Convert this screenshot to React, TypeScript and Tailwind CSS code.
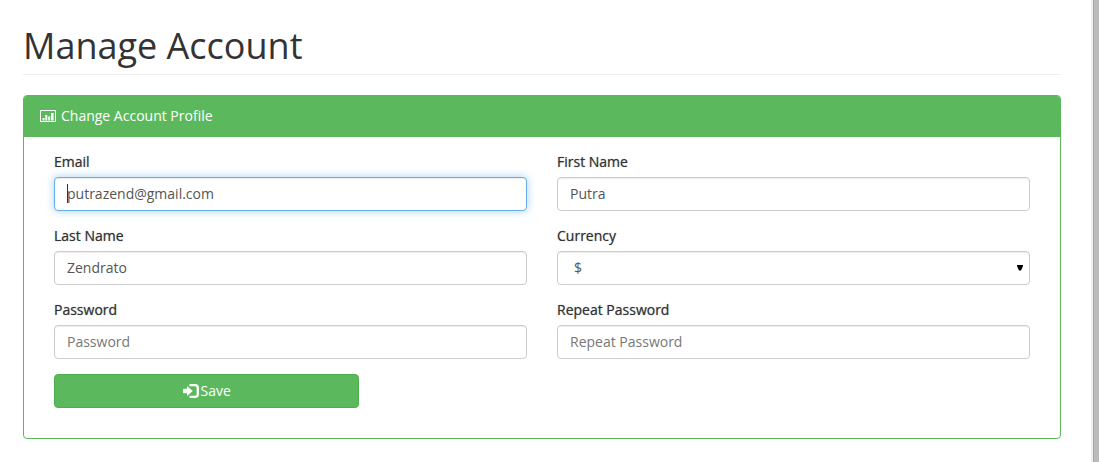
import React from "react";

const labelClass = "mb-[5px] block font-medium text-[#333333] [text-shadow:0_0_1px_#33333399]";
const controlClass =
  "block h-[34px] w-full rounded border border-[#cccccc] bg-white px-3 pb-[2px] text-sm text-[#555555] shadow-[inset_0_1px_1px_rgba(0,0,0,0.075)] outline-none placeholder:text-[#777777] focus:border-[#66afe9] focus:shadow-[inset_0_1px_1px_rgba(0,0,0,0.075),0_0_8px_rgba(102,175,233,0.6)]";

function StatsIcon() {
  return (
    <svg className="h-4 w-4 shrink-0" viewBox="0 0 16 16" fill="currentColor" aria-hidden="true">
      <path fillRule="evenodd" d="M1 2h14a1 1 0 0 1 1 1v10a1 1 0 0 1-1 1H1a1 1 0 0 1-1-1V3a1 1 0 0 1 1-1Zm0 1v10h14V3Z" />
      <path d="M2.5 10h2v2.5h-2zM5.3 7h2v5.5h-2zM8.2 8.5h2v4h-2zM11 5h2.6v7.5H11z" />
    </svg>
  );
}

function LogInIcon() {
  return (
    <svg className="h-4 w-4 shrink-0" viewBox="0 0 16 16" fill="currentColor" aria-hidden="true">
      <path d="M0.6 5.8H4V2.9L9.8 8 4 13.1v-2.9H0.6a0.6 0.6 0 0 1-0.6-0.6V6.4a0.6 0.6 0 0 1 0.6-0.6Z" />
      <path d="M6.5 1H12a4 4 0 0 1 4 4v6a4 4 0 0 1-4 4H6.5v-2.2H12a1.6 1.6 0 0 0 1.6-1.6V4.8A1.6 1.6 0 0 0 12 3.2H6.5Z" />
    </svg>
  );
}

type FieldProps = {
  id: string;
  label: string;
  type?: string;
  value?: string;
  placeholder?: string;
};

function Field({ id, label, type = "text", value, placeholder }: FieldProps) {
  return (
    <div>
      <label htmlFor={id} className={labelClass}>{label}</label>
      <input id={id} name={id} type={type} defaultValue={value} placeholder={placeholder} className={controlClass} />
    </div>
  );
}

export default function App() {
  return (
    <div className="flex min-h-screen bg-white font-['Open_Sans',sans-serif] text-sm leading-5 text-[#333333]">
      <main className="min-w-0 flex-1 pt-[26px] pr-[30px] pb-6 pl-[23px]">
        <h1 className="mb-5 border-b border-[#eeeeee] pb-2 text-4xl leading-10 font-normal">Manage Account</h1>
        <section className="overflow-hidden rounded border border-[#5cb85c]">
          <h2 className="flex items-center gap-[5px] border-b border-[#5cb85c] bg-[#5cb85c] px-4 py-[10px] text-white">
            <StatsIcon />
            Change Account Profile
          </h2>
          <form className="px-[30px] pt-[15px] pb-[30px]" onSubmit={(e) => e.preventDefault()}>
            <div className="grid grid-cols-2 gap-x-[30px] gap-y-[15px]">
              <div>
                <label htmlFor="email" className={labelClass}>Email</label>
                <div className="relative">
                  <input
                    id="email"
                    name="email"
                    type="email"
                    autoFocus
                    defaultValue="putrazend@gmail.com"
                    className={`${controlClass} caret-transparent`}
                  />
                  <span className="pointer-events-none absolute top-[7px] left-[13px] h-[19px] w-px bg-[#333333]" />
                </div>
              </div>
              <Field id="first-name" label="First Name" value="Putra" />
              <Field id="last-name" label="Last Name" value="Zendrato" />
              <div>
                <label htmlFor="currency" className={labelClass}>Currency</label>
                <div className="relative">
                  <select id="currency" name="currency" defaultValue="$" className={`${controlClass} appearance-none pt-px pb-0 pl-4`}>
                    <option>$</option>
                  </select>
                  <svg
                    className="pointer-events-none absolute top-[14px] right-[7px] h-[6px] w-[6px]"
                    viewBox="0 0 6 6"
                    aria-hidden="true"
                  >
                    <path d="M0 0h6v1L4 5.5H2L0 1Z" />
                  </svg>
                </div>
              </div>
              <Field id="password" label="Password" type="password" placeholder="Password" />
              <Field id="repeat-password" label="Repeat Password" type="password" placeholder="Repeat Password" />
            </div>
            <div className="mt-[15px] grid grid-cols-3 gap-x-[30px]">
              <button
                type="submit"
                className="flex h-[34px] items-center justify-center gap-[2px] rounded border border-[#4cae4c] bg-[#5cb85c] text-white"
              >
                <LogInIcon />
                Save
              </button>
            </div>
          </form>
        </section>
      </main>
      <div className="w-2 shrink-0 border-l-2 border-[#f0f0f0] bg-[#bbbbbb]">
        <div className="h-full border-l border-[#a5a5a5]" />
      </div>
    </div>
  );
}
